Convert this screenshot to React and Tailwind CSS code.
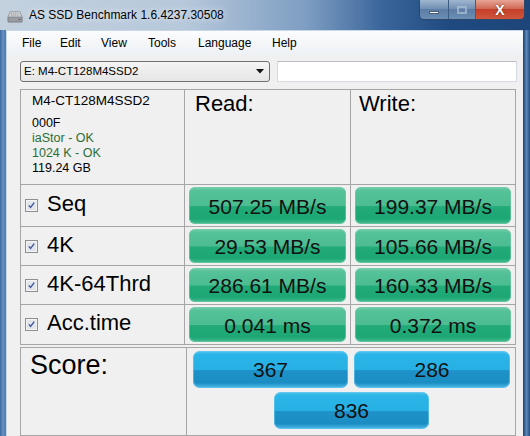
import React from 'react';

const rows = [
  { label: 'Seq', read: '507.25 MB/s', write: '199.37 MB/s' },
  { label: '4K', read: '29.53 MB/s', write: '105.66 MB/s' },
  { label: '4K-64Thrd', read: '286.61 MB/s', write: '160.33 MB/s' },
  { label: 'Acc.time', read: '0.041 ms', write: '0.372 ms' },
];

const greenBtn =
  'rounded-[6px] bg-[linear-gradient(to_bottom,#78cfab_0%,#55c299_10%,#4cbc91_50%,#22ab79_53%,#1ca774_86%,#49bc90_100%)] shadow-[inset_0_0_0_1px_rgba(120,205,170,0.6)]';
const blueBtn =
  'rounded-[7px] bg-[linear-gradient(to_bottom,#52c5ee_0%,#2ab4e7_10%,#27b0e4_50%,#1e92c8_53%,#1b8dc3_86%,#50bdea_100%)] shadow-[inset_0_0_0_1px_rgba(110,200,240,0.6)]';

function DriveIcon() {
  return (
    <svg width="16" height="13" viewBox="0 0 16 13">
      <path d="M3 1.5h10l2.5 5.5v4.5a1 1 0 0 1-1 1h-13a1 1 0 0 1-1-1V7z" fill="#7c7f83" />
      <path d="M3.3 2h9.4l2.1 4.8H1.2z" fill="#c9cbce" />
      <path d="M4.5 2.5v4M6.5 2.5v4M8.5 2.5v4M10.5 2.5v4" stroke="#a9acb0" strokeWidth="0.8" />
      <rect x="1.5" y="7.5" width="13" height="4" fill="#9a9da1" />
      <rect x="11.5" y="9" width="2" height="1" fill="#5a5d60" />
    </svg>
  );
}

function CheckBox() {
  return (
    <svg width="13" height="13" viewBox="0 0 13 13" className="shrink-0">
      <rect x="0.5" y="0.5" width="12" height="12" fill="#f4f4f4" stroke="#8e8f8f" />
      <rect x="2" y="2" width="9" height="9" fill="#e2e5ea" />
      <path d="M3.8 6.4l1.8 2.1 3.6-4.8" fill="none" stroke="#4257a0" strokeWidth="1.4" />
    </svg>
  );
}

function TitleBar() {
  return (
    <div className="h-[30px] flex bg-[linear-gradient(to_right,#c3d1df_0%,#b6c8db_35%,#7d9dc2_58%,#3b669b_72%,#1f4a80_85%,#1d4579_100%)] relative">
      <div className="pl-[7px] pt-[10px]">
        <DriveIcon />
      </div>
      <div className="pl-[6px] pt-[8px] text-[12px] leading-[14px] [text-shadow:0_0_6px_rgba(255,255,255,0.95)]">
        AS SSD Benchmark 1.6.4237.30508
      </div>
      <div className="absolute left-[419px] top-0 flex h-[20px] rounded-b-[5px] border border-t-0 border-[#2d4868] overflow-hidden">
        <div className="w-[29px] border-r border-[#3d5d82] bg-[linear-gradient(to_bottom,#9fb6d0,#7391b4_45%,#5c7ea6_50%,#6a8db4)] flex items-center justify-center">
          <div className="w-[10px] h-[3px] mt-[5px] bg-white border border-[#4a5f78]" />
        </div>
        <div className="w-[27px] border-r border-[#3d5d82] bg-[linear-gradient(to_bottom,#9fb6d0,#7391b4_45%,#5c7ea6_50%,#6a8db4)] flex items-center justify-center">
          <div className="w-[10px] h-[8px] border-2 border-[#aec0d5] opacity-70" />
        </div>
        <div className="w-[48px] bg-[linear-gradient(to_bottom,#e8a596,#d06a55_45%,#c4402a_50%,#d0553c)] flex items-center justify-center">
          <span className="text-white font-bold text-[14px] leading-none [text-shadow:0_0_2px_#5a1a10]">X</span>
        </div>
      </div>
    </div>
  );
}

function Menu() {
  const items = [
    ['File', 'w-[38px]'],
    ['Edit', 'w-[41px]'],
    ['View', 'w-[47px]'],
    ['Tools', 'w-[50px]'],
    ['Language', 'w-[74px]'],
    ['Help', 'w-[30px]'],
  ];
  return (
    <div className="h-[24px] flex items-center pl-[15px] text-[12px] bg-[linear-gradient(to_bottom,#fbfcfd,#eef1f4)]">
      {items.map(([m, w]) => (
        <span key={m} className={w}>{m}</span>
      ))}
    </div>
  );
}

function DriveRow() {
  return (
    <div className="flex gap-[7px] pl-[13px] mt-[6px]">
      <div className="w-[250px] h-[21px] rounded-[3px] border border-[#707070] bg-[linear-gradient(to_bottom,#f4f4f4,#e6e6e6)] flex items-center pl-[3px] pr-[5px] text-[11.5px]">
        <span className="flex-1">E: M4-CT128M4SSD2</span>
        <svg width="8" height="5" viewBox="0 0 8 5">
          <path d="M0 0h8L4 4.5z" fill="#111" />
        </svg>
      </div>
      <div className="w-[240px] h-[21px] bg-white border border-[#d6dbe3] border-t-[#b8bdc6]" />
    </div>
  );
}

function Results() {
  return (
    <div className="pl-[13px] mt-[7px]">
      <div className="w-[496px] grid grid-cols-[163px_165px_164px] grid-rows-[94px_41px_38px_38px_39px] gap-px bg-[#a6a6a6] border border-[#a6a6a6]">
        <div className="bg-[#f0f0f0] pl-[11px] pt-[3px]">
          <div className="text-[13.5px] leading-[16px]">M4-CT128M4SSD2</div>
          <div className="text-[12.5px] leading-[15px] mt-[7px]">
            <div>000F</div>
            <div className="text-[#2a6e36]">iaStor - OK</div>
            <div className="text-[#2a6e36]">1024 K - OK</div>
            <div>119.24 GB</div>
          </div>
        </div>
        <div className="bg-[#f0f0f0] pl-[10px] pt-[1px] text-[22px] leading-[26px]">Read:</div>
        <div className="bg-[#f0f0f0] pl-[8px] pt-[1px] text-[22px] leading-[26px]">Write:</div>
        {rows.map((r) => (
          <React.Fragment key={r.label}>
            <div className="bg-[#f0f0f0] flex items-center pl-[4px] gap-[9px] text-[22px] leading-[26px]">
              <CheckBox />
              <span className="-mt-[3px]">{r.label}</span>
            </div>
            <div className="bg-[#f0f0f0] px-[4px] py-[2px] flex">
              <div className={`${greenBtn} flex-1 flex items-center justify-center text-[21px] text-[#111] pt-[2px]`}>{r.read}</div>
            </div>
            <div className="bg-[#f0f0f0] px-[4px] py-[2px] flex">
              <div className={`${greenBtn} flex-1 flex items-center justify-center text-[21px] text-[#111] pt-[2px]`}>{r.write}</div>
            </div>
          </React.Fragment>
        ))}
      </div>
      <div className="w-[496px] mt-[2px] grid grid-cols-[165px_1fr] grid-rows-[87px] gap-px bg-[#a6a6a6] border border-[#a6a6a6]">
        <div className="bg-[#f0f0f0] pl-[9px] pt-[2px] text-[27px] leading-[31px]">Score:</div>
        <div className="bg-[#f0f0f0] pt-[3px] pl-[6px] text-[21px] text-[#111]">
          <div className="flex gap-[6px]">
            <div className={`${blueBtn} w-[155px] h-[37px] flex items-center justify-center pt-[1px]`}>367</div>
            <div className={`${blueBtn} w-[156px] h-[37px] flex items-center justify-center pt-[1px]`}>286</div>
          </div>
          <div className={`${blueBtn} w-[155px] h-[37px] ml-[81px] mt-[4px] flex items-center justify-center pt-[1px]`}>836</div>
        </div>
      </div>
    </div>
  );
}

export default function App() {
  return (
    <div className="w-[530px] h-[436px] overflow-hidden flex flex-col font-['Liberation_Sans',Arial,sans-serif] text-black bg-[#2d5f97]">
      <TitleBar />
      <div className="flex flex-1">
        <div className="w-[6px] bg-[linear-gradient(to_right,#3b6aa0,#6690c0_50%,#4a7ab0)]" />
        <div className="flex-1 bg-[#f0f0f0] border-l border-t border-[#c9d6e4]">
          <Menu />
          <DriveRow />
          <Results />
        </div>
        <div className="w-[7px] bg-[linear-gradient(to_right,#1d3f6c,#5d88ba_50%,#244d80)]" />
      </div>
    </div>
  );
}
